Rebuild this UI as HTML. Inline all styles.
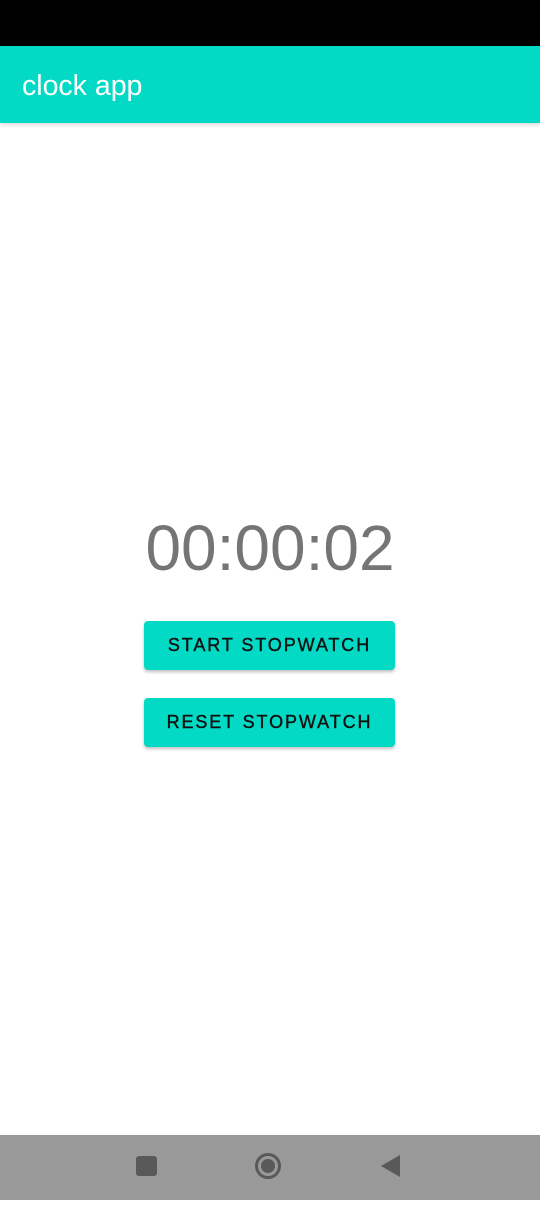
<!DOCTYPE html>
<html><head><style>
body{margin:0;width:540px;height:1200px;position:relative;background:#fff;font-family:"Liberation Sans",sans-serif;overflow:hidden}
.sb{position:absolute;top:0;left:0;width:540px;height:46px;background:#000}
.ab{position:absolute;top:46px;left:0;width:540px;height:77px;background:#03DAC5;box-shadow:0 2px 4px rgba(0,0,0,.15)}
.ab span{position:absolute;left:22px;top:24px;color:#fff;font-size:28.5px}
.t{position:absolute;top:511px;left:0;width:540px;text-align:center;font-size:64px;color:#757575}
.b{position:absolute;left:144px;width:251px;height:49px;background:#03DAC5;border-radius:4px;box-shadow:0 2px 3px rgba(0,0,0,.25);text-align:center;line-height:49px;font-size:18px;letter-spacing:1.9px;color:#111;-webkit-text-stroke:0.4px #111}
.nav{position:absolute;top:1135px;left:0;width:540px;height:65px;background:#999}
</style></head><body>
<div class="sb"></div>
<div class="ab"><span>clock app</span></div>
<div class="t">00:00:02</div>
<div class="b" style="top:621px">START STOPWATCH</div>
<div class="b" style="top:698px">RESET STOPWATCH</div>
<div class="nav"><svg width="540" height="65">
<rect x="136" y="21" width="21" height="20" rx="3" fill="#595959"/>
<circle cx="268" cy="31" r="11.5" fill="none" stroke="#595959" stroke-width="3"/>
<circle cx="268" cy="31" r="7" fill="#595959"/>
<path d="M400 20 L400 42 L381 31 Z" fill="#595959"/>
</svg></div>
</body></html>
